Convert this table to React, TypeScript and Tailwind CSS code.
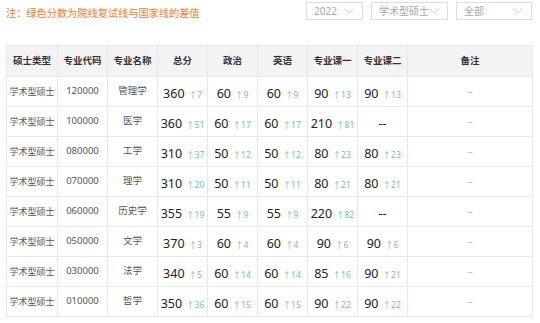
import React from "react";

type Score = { v: string; d?: string };

const rows: { type: string; code: string; name: string; s: Score[] }[] = [
  { type: "学术型硕士", code: "120000", name: "管理学", s: [{ v: "360", d: "7" }, { v: "60", d: "9" }, { v: "60", d: "9" }, { v: "90", d: "13" }, { v: "90", d: "13" }] },
  { type: "学术型硕士", code: "100000", name: "医学", s: [{ v: "360", d: "51" }, { v: "60", d: "17" }, { v: "60", d: "17" }, { v: "210", d: "81" }, { v: "--" }] },
  { type: "学术型硕士", code: "080000", name: "工学", s: [{ v: "310", d: "37" }, { v: "50", d: "12" }, { v: "50", d: "12" }, { v: "80", d: "23" }, { v: "80", d: "23" }] },
  { type: "学术型硕士", code: "070000", name: "理学", s: [{ v: "310", d: "20" }, { v: "50", d: "11" }, { v: "50", d: "11" }, { v: "80", d: "21" }, { v: "80", d: "21" }] },
  { type: "学术型硕士", code: "060000", name: "历史学", s: [{ v: "355", d: "19" }, { v: "55", d: "9" }, { v: "55", d: "9" }, { v: "220", d: "82" }, { v: "--" }] },
  { type: "学术型硕士", code: "050000", name: "文学", s: [{ v: "370", d: "3" }, { v: "60", d: "4" }, { v: "60", d: "4" }, { v: "90", d: "6" }, { v: "90", d: "6" }] },
  { type: "学术型硕士", code: "030000", name: "法学", s: [{ v: "340", d: "5" }, { v: "60", d: "14" }, { v: "60", d: "14" }, { v: "85", d: "16" }, { v: "90", d: "21" }] },
  { type: "学术型硕士", code: "010000", name: "哲学", s: [{ v: "350", d: "36" }, { v: "60", d: "15" }, { v: "60", d: "15" }, { v: "90", d: "22" }, { v: "90", d: "22" }] },
];

const heads = ["硕士类型", "专业代码", "专业名称", "总分", "政治", "英语", "专业课一", "专业课二", "备注"];

const Chevron = () => (
  <svg width="10" height="6" viewBox="0 0 10 6" fill="none">
    <path d="M0.5 0.5 L5 5.2 L9.5 0.5" stroke="#cfcfcf" strokeWidth="0.9" />
  </svg>
);

const Select: React.FC<{ label: string; w: string }> = ({ label, w }) => (
  <div className={`${w} h-[18px] border border-[#dcdcdc] flex items-center justify-between pl-[7px] pr-[8px] text-[10px] text-[#a8a8a8]`}>
    <span>{label}</span>
    <Chevron />
  </div>
);

const App: React.FC = () => {
  return (
    <div
      className="w-[540px] h-[323px] bg-white overflow-hidden"
      style={{ fontFamily: '"Noto Sans", "Noto Sans CJK SC", sans-serif' }}
    >
      {/* top bar */}
      <div className="flex items-start h-[45px] pt-[2px]">
        <div className="pl-[6px] pt-[3px] text-[10.2px] leading-[16px] text-[#f27a2e]">
          注：绿色分数为院线复试线与国家线的差值
        </div>
        <div className="ml-auto flex gap-[8px] pr-[8px]">
          <Select label="2022" w="w-[57px]" />
          <Select label="学术型硕士" w="w-[77px]" />
          <Select label="全部" w="w-[76px]" />
        </div>
      </div>

      {/* table */}
      <table className="ml-[6px] w-[526px] border-collapse table-fixed">
        <colgroup>
          <col className="w-[51px]" />
          <col className="w-[50px]" />
          <col className="w-[50px]" />
          <col className="w-[50px]" />
          <col className="w-[50px]" />
          <col className="w-[50px]" />
          <col className="w-[50px]" />
          <col className="w-[50px]" />
          <col className="w-[125px]" />
        </colgroup>
        <thead>
          <tr className="h-[31px] bg-[#f3f3f3]">
            {heads.map((h) => (
              <th key={h} className="border border-[#e8e8e8] text-[9.5px] font-bold text-[#333] p-0">
                {h}
              </th>
            ))}
          </tr>
        </thead>
        <tbody>
          {rows.map((r) => (
            <tr key={r.code} className="h-[30px]">
              <td className="border border-[#e8e8e8] text-center text-[9px] text-[#555] p-0">{r.type}</td>
              <td className="border border-[#e8e8e8] text-center text-[9.5px] text-[#555] p-0">{r.code}</td>
              <td className="border border-[#e8e8e8] text-center text-[9.5px] text-[#555] p-0">{r.name}</td>
              {r.s.map((s, i) => (
                <td key={i} className="border border-[#e8e8e8] text-center p-0 whitespace-nowrap">
                  <span className="text-[12.5px] text-[#222]">{s.v}</span>
                  {s.d && (
                    <span className="ml-[4px] text-[8.5px] text-[#72c2ac]">↑{s.d}</span>
                  )}
                </td>
              ))}
              <td className="border border-[#e8e8e8] text-center text-[8px] text-[#aaa] p-0">--</td>
            </tr>
          ))}
        </tbody>
      </table>
    </div>
  );
};

export default App;
